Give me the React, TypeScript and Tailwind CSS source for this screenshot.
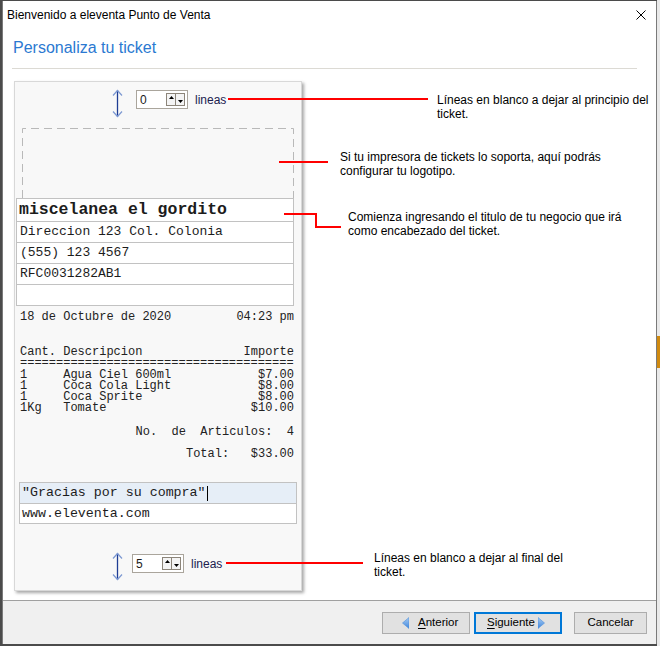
import React from 'react'

const items = [
  { qty: '1     ', name: 'Agua Ciel 600ml', price: '$7.00' },
  { qty: '1     ', name: 'Coca Cola Light', price: '$8.00' },
  { qty: '1     ', name: 'Coca Sprite', price: '$8.00' },
  { qty: '1Kg   ', name: 'Tomate', price: '$10.00' },
]

const headerRows = ['Direccion 123 Col. Colonia', '(555) 123 4567', 'RFC0031282AB1', '']

function UpDownArrow() {
  return (
    <svg width="11" height="29" viewBox="0 0 11 29" className="block shrink-0">
      <path d="M5.5 1.5V27.5" stroke="#1f3d94" strokeWidth="1.3" />
      <path d="M1 6.5L5.5 1.5L10 6.5" fill="none" stroke="#7d99d2" strokeWidth="1.2" />
      <path d="M1 22.5L5.5 27.5L10 22.5" fill="none" stroke="#7d99d2" strokeWidth="1.2" />
    </svg>
  )
}

function Spinner({ value }: { value: string }) {
  return (
    <div className="flex h-[19px] w-[52px] items-center border border-[#aaa59c] bg-white pl-[3px] pr-[2px]">
      <span className="flex-1 text-[12px] leading-none text-[#1a1a1a]">{value}</span>
      <div className="flex h-[13px] border border-[#8c857a] bg-[#f4f4f4]">
        <div className="flex w-[9px] items-start justify-center border-r border-[#8c857a] pt-[2px]">
          <svg width="5" height="3" className="block">
            <path d="M0 3L2.5 0L5 3Z" fill="#000" />
          </svg>
        </div>
        <div className="flex w-[8px] items-end justify-center pb-[2px]">
          <svg width="5" height="3" className="block">
            <path d="M0 0L5 0L2.5 3Z" fill="#000" />
          </svg>
        </div>
      </div>
    </div>
  )
}

function BlueTriangle({ dir }: { dir: 'left' | 'right' }) {
  const d = dir === 'left' ? 'M7 0.5L0.5 6L7 11.5Z' : 'M0 0.5L6.5 6L0 11.5Z'
  return (
    <svg width="7" height="12" viewBox="0 0 7 12" className="block shrink-0">
      <defs>
        <linearGradient id={'tri-' + dir} x1="0" y1="0" x2="0" y2="1">
          <stop offset="0" stopColor="#a9cdf3" />
          <stop offset="1" stopColor="#3f86dc" />
        </linearGradient>
      </defs>
      <path d={d} fill={'url(#tri-' + dir + ')'} stroke="#4d8fdc" strokeWidth="0.6" />
    </svg>
  )
}

function Ticket() {
  return (
    <div className="ml-[11px] mt-[12px] h-[510px] w-[288px] border border-[#d8d8d8] bg-[#f8f8f8] shadow-[2px_2px_3px_rgba(0,0,0,0.35)]">
      {/* lineas al principio */}
      <div className="mt-[7px] flex items-start">
        <div className="ml-[97px]">
          <UpDownArrow />
        </div>
        <div className="ml-[13px] mt-[1px]">
          <Spinner value="0" />
        </div>
        <span className="ml-[7px] mt-[4px] text-[12px] leading-[14px] text-[#20204e]">lineas</span>
      </div>

      {/* logotipo */}
      <div className="ml-[7px] mt-[10px] h-[70px] w-[272px]">
        <svg width="272" height="70" className="block">
          <path d="M0.5 70V0.5H271.5V70" fill="none" stroke="#b9b9b9" strokeDasharray="8 5" />
        </svg>
      </div>

      {/* encabezado */}
      <div className="ml-[1px] w-[278px] border-x border-t border-[#c2c2c2] bg-white font-['Liberation_Mono',monospace] text-[#1c1c1c]">
        <div className="flex h-[23px] items-center border-b border-[#c2c2c2] pl-[2px] text-[16.5px] font-bold">
          miscelanea el gordito
        </div>
        {headerRows.map((row, i) => (
          <div key={i} className="flex h-[21px] items-center border-b border-[#c2c2c2] pl-[3px] text-[13px]">
            {row}
          </div>
        ))}
      </div>

      {/* cuerpo */}
      <div className="ml-[5px] mt-[4px] w-[274px] whitespace-pre font-['Liberation_Mono',monospace] text-[12px] text-[#222]">
        <div className="flex h-[14px] justify-between leading-[14px]">
          <span>18 de Octubre de 2020</span>
          <span>04:23 pm</span>
        </div>
        <div className="mt-[22px] flex h-[12px] justify-between leading-[12px]">
          <span>Cant. Descripcion</span>
          <span>Importe</span>
        </div>
        <div className="h-[10px] overflow-hidden leading-[10px]">{'='.repeat(38)}</div>
        <div className="mt-[2px]">
          {items.map((it) => (
            <div key={it.name} className="flex h-[11px] justify-between leading-[11px]">
              <span>{it.qty + it.name}</span>
              <span>{it.price}</span>
            </div>
          ))}
        </div>
        <div className="mt-[11px] h-[14px] text-right leading-[14px]">No.  de  Articulos:  4</div>
        <div className="mt-[8px] h-[14px] text-right leading-[14px]">Total:   $33.00</div>
      </div>

      {/* pie */}
      <div className="ml-[4px] mt-[21px] w-[278px] border-x border-t border-[#c2c2c2] font-['Liberation_Mono',monospace] text-[13.3px] text-[#1c1c1c]">
        <div className="flex h-[21px] items-center border-b border-[#c2c2c2] bg-[#e6eef7] pl-[2px]">
          <span className="whitespace-pre">"Gracias por su compra"</span>
          <span className="ml-[1px] inline-block h-[15px] w-[1px] bg-black" />
        </div>
        <div className="flex h-[20px] items-center border-b border-[#c2c2c2] bg-white pl-[2px]">
          www.eleventa.com
        </div>
      </div>

      {/* lineas al final */}
      <div className="mt-[28px] flex items-start">
        <div className="ml-[97px]">
          <UpDownArrow />
        </div>
        <div className="ml-[9px] mt-[2px]">
          <Spinner value="5" />
        </div>
        <span className="ml-[7px] mt-[5px] text-[12px] leading-[14px] text-[#20204e]">lineas</span>
      </div>
    </div>
  )
}

export default function App() {
  return (
    <div className="relative flex h-[646px] w-[660px] overflow-hidden bg-[#4b4b4b] font-['Liberation_Sans',Arial,sans-serif]">
      <div className="w-[2px] shrink-0" />
      <div className="mt-[1px] flex h-[643px] w-[655px] shrink-0 flex-col border-x border-[#7a7a7a] bg-white">
        {/* barra de titulo */}
        <div className="flex h-[29px] shrink-0 items-center justify-between pb-[2px] pl-[4px] pr-[10px]">
          <span className="text-[12px] text-black">Bienvenido a eleventa Punto de Venta</span>
          <svg width="10" height="10" viewBox="0 0 10 10" className="block">
            <path d="M0.5 0.5L9.5 9.5M9.5 0.5L0.5 9.5" stroke="#000" strokeWidth="1" />
          </svg>
        </div>

        {/* contenido */}
        <div className="flex-1">
          <div className="ml-[10px] pt-[7px] text-[16px] leading-[22px] text-[#2b79d1]">Personaliza tu ticket</div>
          <div className="ml-[9px] mt-[9px] h-[1px] w-[625px] bg-[#dcdad4]" />
          <Ticket />
        </div>

        {/* botones */}
        <div className="flex h-[44px] shrink-0 items-start justify-end border-t border-[#a0a0a0] bg-[#f0f0f0] pr-[9px] pt-[11px] text-[11.5px] text-black">
          <button className="flex h-[22px] w-[88px] items-center border border-[#adadad] bg-[#e1e1e1] pl-[19px]">
            <BlueTriangle dir="left" />
            <span className="ml-[9px]">
              <span className="underline underline-offset-2">A</span>nterior
            </span>
          </button>
          <button className="ml-[4px] flex h-[22px] w-[88px] items-center justify-between border-2 border-[#0078d7] bg-[#e1e1e1] pl-[11px] pr-[15px]">
            <span>
              <span className="underline underline-offset-2">S</span>iguiente
            </span>
            <BlueTriangle dir="right" />
          </button>
          <button className="ml-[12px] flex h-[22px] w-[73px] items-center justify-center border border-[#adadad] bg-[#e1e1e1]">
            Cancelar
          </button>
        </div>
      </div>
      <div className="flex flex-1 flex-col bg-[#e9e9e9]">
        <div className="mt-[336px] h-[32px] bg-[#d08a10]" />
      </div>

      {/* anotaciones */}
      <div className="absolute left-[228px] top-[98px] h-[2px] w-[200px] bg-[#ff0000]" />
      <div className="absolute left-[437px] top-[93px] text-[12px] leading-[14px] text-black">
        Líneas en blanco a dejar al principio del
        <br />
        ticket.
      </div>

      <div className="absolute left-[279px] top-[161px] h-[2px] w-[49px] bg-[#ff0000]" />
      <div className="absolute left-[340px] top-[150px] text-[12px] leading-[14px] text-black">
        Si tu impresora de tickets lo soporta, aquí podrás
        <br />
        configurar tu logotipo.
      </div>

      <svg width="57" height="16" viewBox="0 0 57 16" className="absolute left-[284px] top-[213px]">
        <polyline points="0,1 32,1 32,14 57,14" fill="none" stroke="#ff0000" strokeWidth="2" />
      </svg>
      <div className="absolute left-[348px] top-[210px] text-[12px] leading-[14px] text-black">
        Comienza ingresando el titulo de tu negocio que irá
        <br />
        como encabezado del ticket.
      </div>

      <div className="absolute left-[226px] top-[562px] h-[2px] w-[137px] bg-[#ff0000]" />
      <div className="absolute left-[374px] top-[551px] text-[12px] leading-[14px] text-black">
        Líneas en blanco a dejar al final del
        <br />
        ticket.
      </div>
    </div>
  )
}
